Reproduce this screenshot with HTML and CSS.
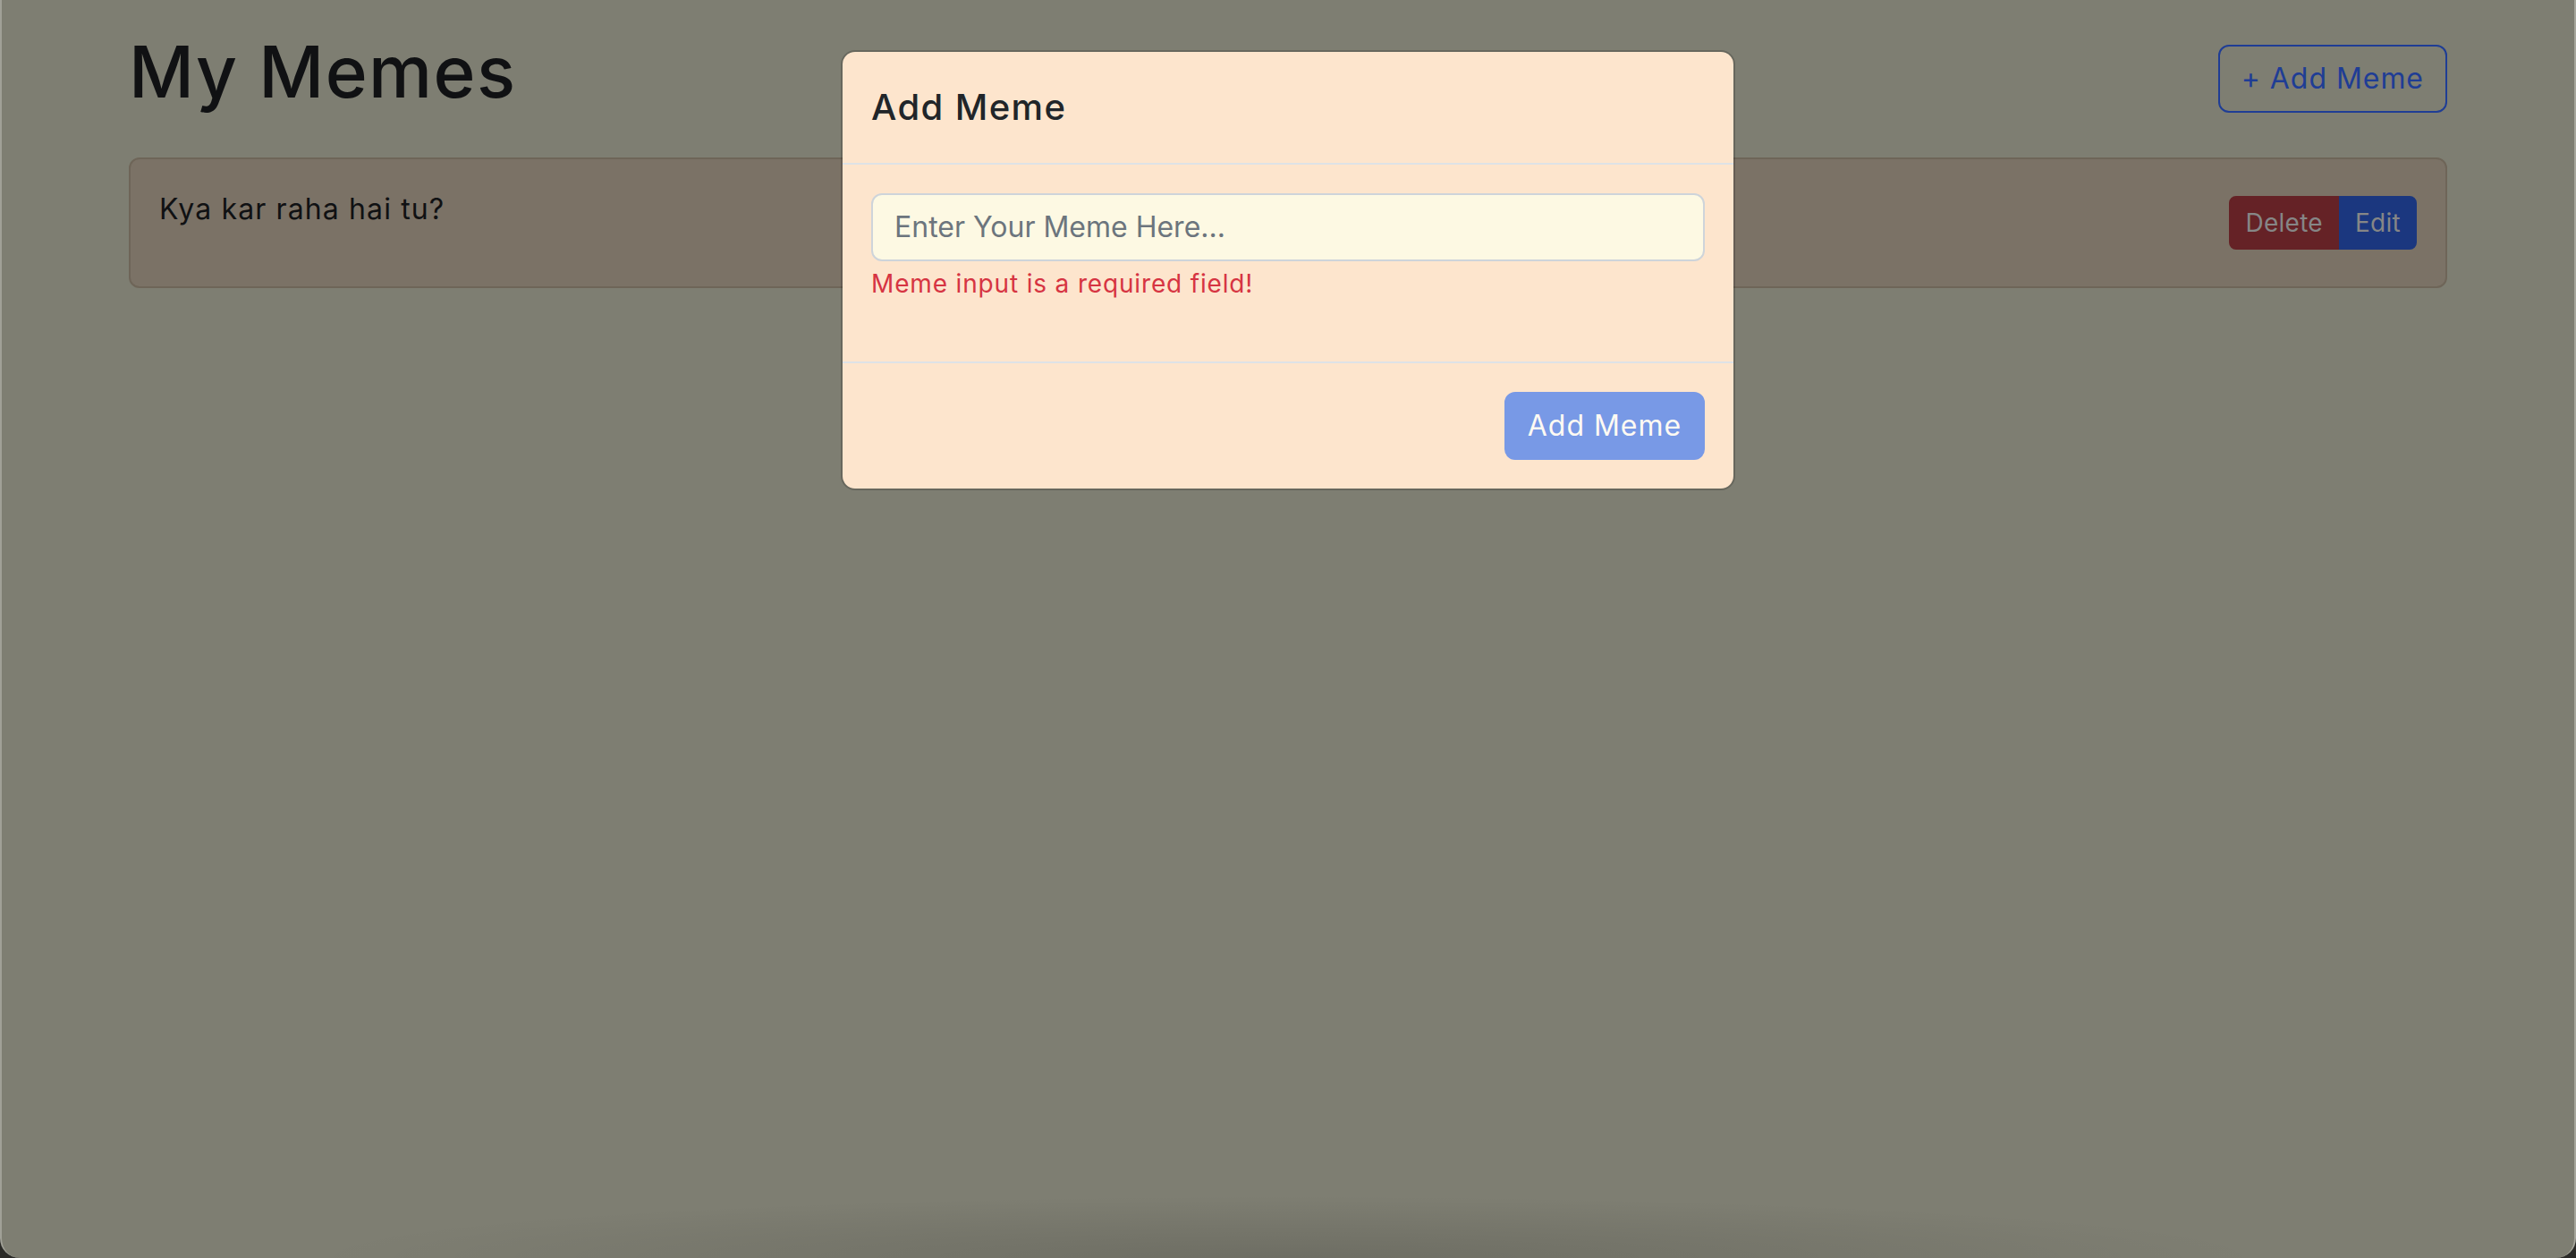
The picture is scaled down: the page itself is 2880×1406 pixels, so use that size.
FILE: index.html
```html
<!DOCTYPE html>
<html lang="en">
<head>
<meta charset="utf-8">
<title>My Memes</title>
<link rel="stylesheet" href="styles.css">
</head>
<body>
<div class="window">
  <main class="container">
    <header class="page-header">
      <h1 class="page-title">My Memes</h1>
      <button class="btn btn-outline" type="button">+ Add Meme</button>
    </header>
    <section class="meme-card">
      <div class="meme-body">
        <p class="meme-text">Kya kar raha hai tu?</p>
        <div class="btn-group">
          <button class="btn-sm btn-delete" type="button">Delete</button>
          <button class="btn-sm btn-edit" type="button">Edit</button>
        </div>
      </div>
    </section>
  </main>
  <div class="modal-layer">
    <div class="modal-dialog">
      <div class="modal-header">
        <h5 class="modal-title">Add Meme</h5>
      </div>
      <div class="modal-body">
        <input class="form-control" type="text" placeholder="Enter Your Meme Here...">
        <div class="invalid-feedback">Meme input is a required field!</div>
      </div>
      <div class="modal-footer">
        <button class="btn btn-submit" type="button">Add Meme</button>
      </div>
    </div>
  </div>
</div>
</body>
</html>
```
FILE: styles.css
```css
html, body {
  margin: 0;
  height: 100%;
}

body {
  background: #2a2a27;
  font-family: Inter, "DejaVu Sans", sans-serif;
  color: #101113;
  letter-spacing: 0.03em;
}

.window {
  position: relative;
  box-sizing: border-box;
  height: 1406px;
  border-left: 2px solid #a0a097;
  border-right: 2px solid #a6a69c;
  border-radius: 0 0 22px 22px;
  overflow: hidden;
  background:
    radial-gradient(ellipse 1100px 70px at 50% 100%, rgba(0, 0, 0, 0.13), rgba(0, 0, 0, 0)),
    #7e7e72;
}

.container {
  width: 2592px;
  margin: 0 auto;
  padding-top: 32px;
}

.page-header {
  display: flex;
  justify-content: space-between;
  align-items: center;
}

.page-title {
  margin: 0 0 16px;
  font-size: 80px;
  font-weight: 500;
  line-height: 96px;
  letter-spacing: 0.018em;
  color: #101113;
}

.btn {
  font-family: inherit;
  font-size: 32px;
  line-height: 48px;
  letter-spacing: 0.03em;
  padding: 12px 24px;
  border: 2px solid;
  border-radius: 12px;
}

.btn-outline {
  background: transparent;
  color: #1f3d95;
  border-color: #1f3d95;
}

.meme-card {
  margin-top: 32px;
  background: #7b7266;
  border: 2px solid #6e6558;
  border-radius: 12px;
}

.meme-body {
  padding: 32px;
  display: flex;
  justify-content: space-between;
  align-items: center;
}

.meme-text {
  margin: 0 0 30px;
  font-size: 32px;
  line-height: 48px;
  letter-spacing: 0.035em;
  color: #101113;
}

.btn-group {
  display: flex;
}

.btn-sm {
  font-family: inherit;
  font-size: 28px;
  line-height: 40px;
  letter-spacing: 0.01em;
  padding: 8px 16px;
  border: 2px solid;
  color: #868686;
}

.btn-delete {
  background: #652226;
  border-color: #652226;
  border-radius: 8px 0 0 8px;
}

.btn-edit {
  background: #1b377f;
  border-color: #1b377f;
  border-radius: 0 8px 8px 0;
}

.modal-layer {
  position: absolute;
  inset: 0;
}

.modal-dialog {
  box-sizing: border-box;
  width: 1000px;
  margin: 56px auto 0;
  background: #fde5cd;
  background-clip: padding-box;
  border: 2px solid rgba(0, 0, 0, 0.175);
  border-radius: 16px;
  color: #212529;
}

.modal-header {
  padding: 32px;
  border-bottom: 2px solid #dee2e6;
}

.modal-title {
  margin: 0;
  font-size: 40px;
  font-weight: 500;
  line-height: 60px;
  letter-spacing: 0.035em;
}

.modal-body {
  padding: 32px;
}

.form-control {
  display: block;
  box-sizing: border-box;
  width: 100%;
  font-family: inherit;
  font-size: 32px;
  line-height: 48px;
  letter-spacing: 0;
  padding: 12px 24px;
  border: 2px solid #ced4da;
  border-radius: 12px;
  background: #fdf9e3;
  color: #212529;
  outline: none;
}

.form-control::placeholder {
  color: #6c757d;
  opacity: 1;
}

.invalid-feedback {
  margin: 4px 0 34px;
  font-size: 28px;
  line-height: 42px;
  letter-spacing: 0.03em;
  color: #d63442;
}

.modal-footer {
  display: flex;
  justify-content: flex-end;
  padding: 24px;
  border-top: 2px solid #dee2e6;
}

.btn-submit {
  margin: 8px;
  background: #7899e6;
  border-color: #7899e6;
  color: #fffaf3;
}
```
